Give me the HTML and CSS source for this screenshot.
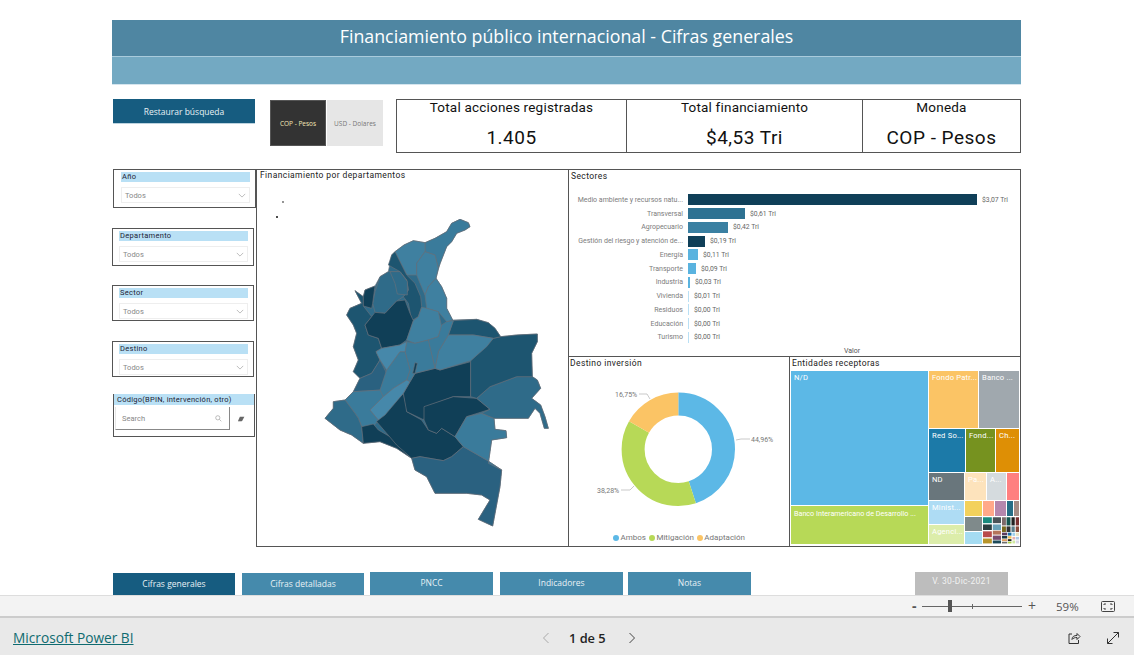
FILE: index.html
```html
<!DOCTYPE html>
<html lang="es">
<head>
<meta charset="utf-8">
<title>Financiamiento público internacional</title>
<link rel="stylesheet" href="styles.css">
</head>
<body>
<main class="report">
  <header class="banner">
    <h1 class="banner-title">Financiamiento público internacional - Cifras generales</h1>
    <div class="banner-sub"></div>
  </header>

  <section class="controls">
    <button class="restore">Restaurar búsqueda</button>
    <div class="toggle">
      <div class="toggle-on">COP - Pesos</div>
      <div class="toggle-off">USD - Dolares</div>
    </div>
    <div class="kpis">
      <div class="kpi kpi-a"><div class="kpi-label">Total acciones registradas</div><div class="kpi-value">1.405</div></div>
      <div class="kpi kpi-b"><div class="kpi-label">Total financiamiento</div><div class="kpi-value">$4,53 Tri</div></div>
      <div class="kpi kpi-c"><div class="kpi-label">Moneda</div><div class="kpi-value">COP - Pesos</div></div>
    </div>
  </section>

  <section class="main">
    <aside class="filters">
      <div class="slicer slicer-year">
        <div class="slicer-head">Año</div>
        <div class="slicer-drop"><span>Todos</span><svg class="chev" viewBox="0 0 10 6"><path d="M1 1l4 4 4-4"/></svg></div>
      </div>
      <div class="slicer slicer-dept">
        <div class="slicer-head">Departamento</div>
        <div class="slicer-drop"><span>Todos</span><svg class="chev" viewBox="0 0 10 6"><path d="M1 1l4 4 4-4"/></svg></div>
      </div>
      <div class="slicer slicer-sector">
        <div class="slicer-head">Sector</div>
        <div class="slicer-drop"><span>Todos</span><svg class="chev" viewBox="0 0 10 6"><path d="M1 1l4 4 4-4"/></svg></div>
      </div>
      <div class="slicer slicer-dest">
        <div class="slicer-head">Destino</div>
        <div class="slicer-drop"><span>Todos</span><svg class="chev" viewBox="0 0 10 6"><path d="M1 1l4 4 4-4"/></svg></div>
      </div>
      <div class="slicer-code">
        <div class="code-head">Código(BPIN, intervención, otro)</div>
        <div class="code-row">
          <div class="code-search"><span>Search</span>
            <svg class="search-ico" viewBox="0 0 10 10"><circle cx="4" cy="4" r="3"/><path d="M6.2 6.2L9 9"/></svg>
          </div>
          <svg class="eraser" viewBox="0 0 10 8"><path d="M3.5 1H9.500L6.500 6.500H1z"/><path class="eraser-l" d="M1 7.500h5"/></svg>
        </div>
      </div>
    </aside>

    <article class="map-panel">
      <h2 class="vis-title">Financiamiento por departamentos</h2>
      <svg class="map" viewBox="-90 -60 870 1080">
        <g class="dep">
          <path class="c2" d="M480 58L505 68 510 80 495 90 470 100 455 125 440 140 420 190 408 235 425 260 440 295 440 325 458 360 530 358 565 368 585 385 602 410 650 405 712 402 712 425 695 460 697 530 712 540 722 565 695 595 722 615 735 650 745 685 733 685 720 640 705 625 685 655 582 655 585 688 618 692 620 713 575 720 570 755 565 790 605 810 600 860 578 978 535 958 570 900 545 885 500 880 405 880 380 830 345 810 335 775 290 745 240 725 190 730 155 705 120 690 75 655 100 625 100 605 135 600 160 575 180 535 160 515 175 480 160 440 170 400 160 375 140 345 150 325 185 310 165 272 190 290 195 270 225 258 240 230 265 215 275 165 285 155 312 135 340 122 375 128 405 115 440 95 455 70z"/>
          <path class="c3" d="M480 58L505 68 510 80 495 90 470 100 455 125 440 140 415 205 405 165 375 155 375 128 405 115 440 95 455 70z"/>
          <path class="c4" d="M285 155L312 135 340 122 375 128 375 155 350 190 350 225 320 225 305 195z"/>
          <path class="c4" d="M375 155L405 165 415 205 408 235 385 260 375 285 360 250 350 225 350 190z"/>
          <path class="c1" d="M275 165L285 155 305 195 320 225 345 250 362 290 365 320 355 350 335 362 325 310 310 290 325 270 320 240 300 215 265 195z"/>
          <path class="c2" d="M240 230L265 215 300 215 320 240 325 270 310 290 290 303 255 340 225 337 218 310 225 275z"/>
          <path class="c2" d="M270 215L300 215 322 245 322 285 292 282 285 250z"/>
          <path class="c1" d="M165 272L190 290 190 318 215 350 195 375 205 405 235 415 245 445 228 455 240 480 215 520 180 535 160 515 175 480 160 440 170 400 160 375 140 345 150 325 185 310z"/>
          <path class="c0" d="M195 375L215 350 225 337 255 340 290 303 315 300 330 340 340 362 320 420 300 435 245 445 235 415 205 405z"/>
          <path class="c0" d="M190 290L195 270 225 258 218 310 215 325 190 318z"/>
          <path class="c25" d="M180 535L215 520 240 480 260 520 245 570 160 575z"/>
          <path class="c3" d="M135 600L160 575 245 570 250 590 210 630 235 660 220 680 185 680 175 655 165 640z"/>
          <path class="c2" d="M75 655L100 625 100 605 135 600 165 640 175 655 185 680 190 730 155 705 120 690z"/>
          <path class="c0" d="M185 680L220 672 235 690 270 710 335 775 290 745 240 725 190 730z"/>
          <path class="c0" d="M230 665L310 580 320 620 320 635 365 660 385 690 410 700 425 685 465 710 490 740 455 770 430 782 360 770 335 775 290 735z"/>
          <path class="c0" d="M310 580L345 520 405 505 420 510 512 485 512 590 460 590 380 620 372 660 320 635z"/>
          <path class="c0" d="M372 620L460 590 530 595 570 628 500 650 465 710 425 685 410 700 385 690 372 660z"/>
          <path class="c25" d="M335 775L360 770 430 782 455 770 490 740 560 780 605 810 600 860 578 978 535 958 570 900 545 885 500 880 405 880 380 830 345 810z"/>
          <path class="c3" d="M465 710L500 650 545 640 582 655 585 688 618 692 620 713 575 720 570 755 565 790 605 810 560 780 490 740z"/>
          <path class="c2" d="M530 595L570 560 650 530 697 530 712 540 722 565 695 595 722 615 735 650 745 685 733 685 720 640 705 625 685 655 582 655 545 640 570 628z"/>
          <path class="c1" d="M512 482L580 415 602 410 650 405 712 402 712 425 695 460 697 530 650 530 570 560 530 595 512 590z"/>
          <path class="c1" d="M445 405L460 362 530 358 565 368 585 385 602 410 580 415 520 405z"/>
          <path class="c4" d="M405 505L415 455 445 405 520 405 580 415 560 440 512 482 420 510z"/>
          <path class="c4" d="M385 260L408 235 425 260 440 295 440 325 458 360 440 365 415 335 380 325 375 285z"/>
          <path class="c4" d="M365 322L380 325 415 335 425 380 415 410 385 420 345 430 320 420 340 362 355 350z"/>
          <path class="c3" d="M415 410L425 375 440 365 460 362 445 405 415 455 405 505 385 425 385 420z"/>
          <path class="c3" d="M315 455L320 425 345 430 385 420 405 505 345 520 330 545 320 540 330 510z"/>
          <path class="c3" d="M240 570L260 510 300 455 315 455 330 510 320 540 280 565 250 590z"/>
          <path class="c5" d="M210 630L250 590 280 565 320 540 330 545 310 580 255 645 235 660z"/>
          <path class="c5" d="M228 455L245 445 300 435 320 425 315 455 300 455 260 510 240 480z"/>
          <path class="c0" d="M345 488L352 490 345 520 338 520z"/>
        </g>
        <circle class="isle" cx="-51" cy="6" r="2.500"/>
        <circle class="isle" cx="-69" cy="51" r="3"/>
      </svg>
    </article>

    <div class="right">
      <article class="sectors">
        <h2 class="vis-title sectors-title">Sectores</h2>
        <ul class="bars">
          <li class="bar-row"><span class="bar-name">Medio ambiente y recursos natu...</span><span class="bar b-dark" style="width:289px"></span><span class="bar-val">$3,07 Tri</span></li>
          <li class="bar-row"><span class="bar-name">Transversal</span><span class="bar b-mid" style="width:57px"></span><span class="bar-val">$0,61 Tri</span></li>
          <li class="bar-row"><span class="bar-name">Agropecuario</span><span class="bar b-mid2" style="width:40px"></span><span class="bar-val">$0,42 Tri</span></li>
          <li class="bar-row"><span class="bar-name">Gestión del riesgo y atención de...</span><span class="bar b-dark" style="width:17px"></span><span class="bar-val">$0,19 Tri</span></li>
          <li class="bar-row"><span class="bar-name">Energía</span><span class="bar b-light" style="width:10px"></span><span class="bar-val">$0,11 Tri</span></li>
          <li class="bar-row"><span class="bar-name">Transporte</span><span class="bar b-light" style="width:8px"></span><span class="bar-val">$0,09 Tri</span></li>
          <li class="bar-row"><span class="bar-name">Industria</span><span class="bar b-light" style="width:2px"></span><span class="bar-val">$0,03 Tri</span></li>
          <li class="bar-row"><span class="bar-name">Vivienda</span><span class="bar b-pale" style="width:1px"></span><span class="bar-val">$0,01 Tri</span></li>
          <li class="bar-row"><span class="bar-name">Residuos</span><span class="bar b-pale" style="width:1px"></span><span class="bar-val">$0,00 Tri</span></li>
          <li class="bar-row"><span class="bar-name">Educación</span><span class="bar b-pale" style="width:1px"></span><span class="bar-val">$0,00 Tri</span></li>
          <li class="bar-row"><span class="bar-name">Turismo</span><span class="bar b-pale" style="width:1px"></span><span class="bar-val">$0,00 Tri</span></li>
        </ul>
        <div class="axis-name">Valor</div>
      </article>

      <div class="lower">
        <article class="donut-panel">
          <h2 class="vis-title">Destino inversión</h2>
          <svg class="donut" viewBox="569 369 220 161">
            <g class="ring">
              <circle class="seg-a" cx="678.300" cy="449.300" r="45.200" pathLength="100"/>
              <circle class="seg-b" cx="678.300" cy="449.300" r="45.200" pathLength="100"/>
              <circle class="seg-c" cx="678.300" cy="449.300" r="45.200" pathLength="100"/>
            </g>
            <path class="leader" d="M736 440L741 439H750M621 490H630L634 486M639 394H647L650 399"/>
            <text class="pct" x="751" y="442">44,96%</text>
            <text class="pct" x="597" y="493">38,28%</text>
            <text class="pct" x="615" y="397">16,75%</text>
          </svg>
          <div class="legend">
            <span class="leg"><i class="dot dot-a"></i>Ambos</span>
            <span class="leg"><i class="dot dot-b"></i>Mitigación</span>
            <span class="leg"><i class="dot dot-c"></i>Adaptación</span>
          </div>
        </article>

        <article class="tree-panel">
          <h2 class="vis-title">Entidades receptoras</h2>
          <div class="tree">
            <div class="tree-left">
              <div class="tile t-nd">N/D</div>
              <div class="tile t-bid">Banco Interamericano de Desarrollo ...</div>
            </div>
            <div class="tree-right">
              <div class="tree-row r1">
                <div class="tile t-fondo">Fondo Patr...</div>
                <div class="tile t-banco">Banco ...</div>
              </div>
              <div class="tree-row r2">
                <div class="tile t-red">Red So...</div>
                <div class="tile t-fond">Fond...</div>
                <div class="tile t-ch">Ch...</div>
              </div>
              <div class="tree-row r3">
                <div class="tile t-nd2">ND</div>
                <div class="tile t-pa">Pa...</div>
                <div class="tile t-a">A...</div>
                <div class="tile t-rose"></div>
              </div>
              <div class="tree-row r4">
                <div class="tree-col c-min">
                  <div class="tile t-min">Minist...</div>
                  <div class="tile t-age">Agenci...</div>
                </div>
                <div class="tree-col c-small">
                  <div class="tree-row r5">
                    <div class="tile t-y"></div>
                    <div class="tile t-s"></div>
                    <div class="tile t-p"></div>
                    <div class="tile t-t"></div>
                    <div class="tile t-b"></div>
                  </div>
                  <div class="tree-row r6">
                    <div class="tree-col c-g">
                      <div class="tile t-g"></div>
                      <div class="tile t-l"></div>
                    </div>
                    <svg class="tiny" viewBox="590 487 110 80">
                      <rect x="590" y="487" width="27" height="18" fill="#1a8a7d"/>
                      <rect x="590" y="509" width="27" height="17" fill="#2c3e3f"/>
                      <rect x="590" y="530" width="27" height="18" fill="#b84a4a"/>
                      <rect x="590" y="552" width="27" height="15" fill="#b8952b"/>
                      <rect x="620" y="487" width="25" height="18" fill="#4a5356"/>
                      <rect x="620" y="509" width="25" height="17" fill="#6aa3b8"/>
                      <rect x="620" y="528" width="25" height="12" fill="#b5735a"/>
                      <rect x="620" y="543" width="25" height="13" fill="#784b6e"/>
                      <rect x="620" y="558" width="25" height="9" fill="#1d4a5a"/>
                      <rect x="648" y="487" width="12" height="25" fill="#7d6a6a"/>
                      <rect x="662" y="487" width="12" height="25" fill="#14554f"/>
                      <rect x="677" y="487" width="10" height="25" fill="#222222"/>
                      <rect x="690" y="487" width="10" height="25" fill="#7a2f2f"/>
                      <rect x="648" y="515" width="12" height="17" fill="#7a6a1f"/>
                      <rect x="662" y="515" width="12" height="17" fill="#333333"/>
                      <rect x="677" y="515" width="10" height="17" fill="#5a7d8a"/>
                      <rect x="690" y="515" width="10" height="17" fill="#8a4a3a"/>
                      <rect x="648" y="534" width="16" height="8" fill="#5a3a5e"/>
                      <rect x="648" y="544" width="16" height="8" fill="#1e3a44"/>
                      <rect x="648" y="554" width="16" height="6" fill="#e0a060"/>
                      <rect x="648" y="562" width="16" height="5" fill="#6d6d6d"/>
                      <rect x="666" y="534" width="11" height="9" fill="#1a6fa8"/>
                      <rect x="666" y="545" width="11" height="7" fill="#f0c050"/>
                      <rect x="666" y="554" width="11" height="6" fill="#222222"/>
                      <rect x="666" y="562" width="11" height="5" fill="#a8d040"/>
                      <rect x="680" y="534" width="8" height="10" fill="#9fd0ee"/>
                      <rect x="690" y="534" width="10" height="10" fill="#e8e0c0"/>
                      <rect x="680" y="547" width="8" height="8" fill="#e8b0b0"/>
                      <rect x="690" y="547" width="10" height="8" fill="#b0c8e8"/>
                      <rect x="680" y="558" width="8" height="9" fill="#d0e8a0"/>
                      <rect x="690" y="558" width="10" height="9" fill="#d8d8e8"/>
                    </svg>
                  </div>
                </div>
              </div>
            </div>
          </div>
        </article>
      </div>
    </div>
  </section>

  <nav class="tabs">
    <div class="tab tab-active">Cifras generales</div>
    <div class="tab tab-2">Cifras detalladas</div>
    <div class="tab tab-3">PNCC</div>
    <div class="tab tab-4">Indicadores</div>
    <div class="tab tab-5">Notas</div>
    <div class="version">V. 30-Dic-2021</div>
  </nav>
</main>

<div class="zoombar">
  <span class="zoom-minus">-</span>
  <div class="slider"><span class="slider-tick"></span><span class="slider-thumb"></span></div>
  <span class="zoom-plus">+</span>
  <span class="zoom-pct">59%</span>
  <svg class="fit" viewBox="0 0 14 11"><rect x="0.500" y="0.500" width="13" height="10" rx="1"/><path d="M3 4V3h2M11 4V3H9M3 7v1h2M11 7v1H9"/></svg>
</div>

<footer class="footer">
  <a class="brand" href="#">Microsoft Power BI</a>
  <div class="pager">
    <svg class="pg pg-off" viewBox="0 0 8 12"><path d="M6.500 1L1.500 6l5 5"/></svg>
    <span class="pg-text">1 de 5</span>
    <svg class="pg" viewBox="0 0 8 12"><path d="M1.500 1l5 5-5 5"/></svg>
  </div>
  <div class="foot-icons">
    <svg class="share" viewBox="0 0 14 14"><path d="M5 3H2v9.500h9.500V9"/><path d="M5 8.500C5 5.500 7 4.500 10 4.500V2.500L13 5.500 10 8.500V6.500C8 6.500 6 7 5 8.500z"/></svg>
    <svg class="expand" viewBox="0 0 14 14"><path d="M1.500 12.500L12.500 1.500M7.500 1.500h5v5M1.500 7.500v5h5"/></svg>
  </div>
</footer>
</body>
</html>
```
FILE: styles.css
```css
* { box-sizing: border-box; }
html, body { margin: 0; padding: 0; height: 655px; overflow: hidden; background: #fff; }
body { font-family: "Roboto", "Liberation Sans", sans-serif; color: #222; }

.report { height: 595px; padding: 20px 113px 0 112px; overflow: hidden; }

/* banner */
.banner { height: 65px; border-bottom: 1px solid #d5e5ee; }
.banner-title {
  margin: 0; height: 37px; background: #4f86a2; color: #fff; text-align: center;
  font: 400 17.800px/32px "Open Sans", sans-serif; border-bottom: 1px solid #a9cbdc;
}
.banner-sub { height: 27px; background: #73a9c2; }

/* controls */
.controls { display: flex; margin-top: 14px; height: 54px; }
.restore {
  width: 142px; height: 25px; margin-left: 1px; border: 0; border-bottom: 1px solid #bcd3df; background: #165c80; color: #e8f1f5;
  font: 400 8.500px "Open Sans", sans-serif; padding: 0;
}
.toggle { display: flex; gap: 1px; margin: 1px 0 0 15px; height: 46px; }
.toggle-on, .toggle-off { width: 56px; display: flex; align-items: center; justify-content: center; font: 400 6.500px "Open Sans", sans-serif; }
.toggle-on { background: #333; color: #f3e7b5; border: 1px solid #555; }
.toggle-off { background: #e6e6e6; color: #777; }
.kpis { display: flex; margin-left: 13px; width: 625px; border: 1px solid #555; }
.kpi { text-align: center; }
.kpi + .kpi { border-left: 1px solid #555; }
.kpi-a { width: 229px; }
.kpi-b { width: 236px; }
.kpi-c { flex: 1; }
.kpi-label { font-size: 13.500px; line-height: 15px; letter-spacing: 0.2px; color: #111; }
.kpi-value { font-size: 19px; line-height: 24px; margin-top: 11px; letter-spacing: 0.5px; color: #111; }

/* main */
.main { display: flex; margin-top: 16px; height: 378px; }
.filters { width: 144px; flex: none; display: flex; flex-direction: column; }
.slicer { border: 1px solid #555; width: 142px; padding: 2px 5px 0 6px; }
.slicer-head { height: 10px; background: #b9e0f5; font-size: 7.500px; line-height: 10px; letter-spacing: 0.3px; padding-left: 1px; color: #223; }
.slicer-drop {
  display: flex; justify-content: space-between; align-items: center; height: 16px; margin-top: 5px;
  border: 1px solid #eee; padding: 0 3px; font-size: 7.500px; color: #888;
}
.slicer-year { width: 143px; margin-left: 1px; height: 39px; padding-left: 7px; padding-top: 2px; }
.slicer-dept { margin-top: 20px; height: 38px; }
.slicer-sector { margin-top: 19px; height: 36px; }
.slicer-dest { margin-top: 20px; height: 36px; }
.chev { width: 8px; height: 5px; fill: none; stroke: #999; stroke-width: 0.800; }
.slicer-code { margin: 17px 0 0 1px; height: 43px; width: 142px; border: 1px solid #555; border-top: 0; }
.code-head { height: 11px; background: #b9e0f5; font-size: 7.500px; line-height: 11px; letter-spacing: 0.25px; color: #223; padding-left: 3px; white-space: nowrap; }
.code-row { display: flex; align-items: center; margin-top: 2px; padding-left: 1px; }
.code-search {
  width: 115px; height: 23px; border-right: 1px solid #888; border-bottom: 1px solid #888; border-left: 1px solid #e6e6e6;
  display: flex; align-items: center; justify-content: space-between; padding: 0 7px 0 6px; font-size: 7.500px; color: #888;
}
.search-ico { width: 7px; height: 7px; fill: none; stroke: #999; stroke-width: 0.900; }
.eraser { width: 8px; height: 6px; margin-left: 7px; fill: #666; }
.eraser-l { stroke: #aaa; stroke-width: 0.800; fill: none; }

/* panels */
.vis-title { margin: 0; font-size: 8.500px; line-height: 11px; font-weight: 400; letter-spacing: 0.4px; color: #222; padding-left: 2px; }
.map-panel { width: 313px; flex: none; border: 1px solid #555; }
.map-panel .vis-title { padding-left: 3px; height: 10px; }
.map { display: block; width: 290px; height: 360px; margin-left: 13px; }
.dep path { stroke: #66707a; stroke-width: 2; stroke-linejoin: round; }
.c0 { fill: #103f57; }
.c1 { fill: #1d5570; }
.c2 { fill: #2f6b89; }
.c25 { fill: #2a6180; }
.c3 { fill: #3a7b9b; }
.c4 { fill: #3f80a0; }
.c5 { fill: #4688aa; }
.isle { fill: #111; }

.right { flex: 1; display: flex; flex-direction: column; margin-left: -1px; }
.sectors { height: 188px; border: 1px solid #555; }
.sectors-title { padding: 1px 0 0 2px; height: 19px; }
.bars { list-style: none; margin: 4px 0 0; padding: 0; }
.bar-row { display: flex; align-items: center; height: 13.750px; }
.bar-name { width: 114px; margin-right: 5px; flex: none; text-align: right; font-size: 7px; color: #7c7c7c; white-space: nowrap; }
.bar { height: 11px; flex: none; }
.b-dark { background: #0f3f58; }
.b-mid { background: #2e7292; }
.b-mid2 { background: #3a80a2; }
.b-light { background: #5ab3df; }
.b-pale { background: #b9e0f5; }
.bar-val { margin-left: 5px; font-size: 6.800px; color: #666; white-space: nowrap; }
.axis-name { text-align: center; font-size: 7px; color: #555; margin-top: 3px; padding-left: 115px; line-height: 9px; }

.lower { display: flex; flex: 1; margin-top: -1px; }
.donut-panel { width: 222px; border: 1px solid #555; }
.donut-panel .vis-title { height: 12px; line-height: 12px; padding-left: 1px; }
.donut { display: block; width: 220px; height: 161px; }
.ring circle { fill: none; stroke-width: 23; }
.ring { transform: rotate(-90deg); transform-origin: 678.300px 449.300px; }
.seg-a { stroke: #5cb8e6; stroke-dasharray: 44.960 100; }
.seg-b { stroke: #b7d957; stroke-dasharray: 38.280 100; stroke-dashoffset: -44.960; }
.seg-c { stroke: #fbc465; stroke-dasharray: 16.760 100; stroke-dashoffset: -83.240; }
.leader { fill: none; stroke: #bbb; stroke-width: 0.800; }
.pct { font-size: 7px; fill: #777; }
.legend { display: flex; justify-content: center; gap: 3px; font-size: 8px; color: #777; margin-top: 2px; line-height: 11px; }
.leg { display: flex; align-items: center; gap: 1.500px; }
.dot { width: 6px; height: 6px; border-radius: 50%; }
.dot-a { background: #5cb8e6; }
.dot-b { background: #b7d957; }
.dot-c { background: #fbc465; }

.tree-panel { flex: 1; margin-left: -1px; border: 1px solid #555; padding-left: 1px; }
.tree-panel .vis-title { height: 14px; line-height: 12px; padding-left: 1px; }
.tree { display: flex; gap: 1px; height: 173px; }
.tree-left { width: 137px; display: flex; flex-direction: column; gap: 1px; }
.tree-right { width: 90px; display: flex; flex-direction: column; gap: 1px; }
.tree-row { display: flex; gap: 1px; }
.tree-col { display: flex; flex-direction: column; gap: 1px; }
.tile { color: #fff; font-size: 7.600px; letter-spacing: 0.2px; line-height: 10px; padding: 2px 0 0 3px; overflow: hidden; white-space: nowrap; }
.t-nd { height: 134px; background: #5cb8e6; }
.t-bid { flex: 1; background: #b7d957; padding-top: 3px; font-size: 7.200px; letter-spacing: 0; }
.r1 { height: 57px; }
.r2 { height: 43px; }
.r3 { height: 27px; }
.r4 { flex: 1; }
.t-fondo { width: 49px; background: #fbc465; }
.t-banco { flex: 1; background: #a0a8ae; }
.t-red { width: 36px; background: #1c7aa8; }
.t-fond { width: 29px; background: #76921f; }
.t-ch { flex: 1; background: #de8f05; }
.t-nd2 { width: 35px; background: #69767c; }
.t-pa { width: 21px; background: #fde3bc; }
.t-a { width: 19px; background: #d5dbde; }
.t-rose { flex: 1; background: #ff8080; }
.c-min { width: 35px; }
.t-min { height: 23px; background: #aedcf4; }
.t-age { flex: 1; background: #dcedaa; }
.c-small { flex: 1; }
.r5 { height: 15px; }
.r6 { flex: 1; }
.t-y { width: 17px; background: #f3d15c; }
.t-s { width: 11px; background: #ffa98a; }
.t-p { width: 11px; background: #b587ad; }
.t-t { width: 6px; background: #266d85; }
.t-b { flex: 1; background: #a48b84; }
.c-g { width: 17px; }
.t-g { height: 14px; background: #7f8a8b; }
.t-l { flex: 1; background: #a5dcf2; }
.tiny { display: block; width: 36px; height: 26.700px; }

/* tabs */
.tabs { display: flex; align-items: flex-end; margin-top: 25px; height: 23px; padding-left: 1px; }
.tab { width: 123px; height: 23px; display: flex; align-items: center; justify-content: center; background: #458aac; color: #e8f1f5; font: 400 8.500px "Open Sans", sans-serif; }
.tab-active { width: 122px; height: 22px; background: #165c80; padding-bottom: 1px; }
.tab-2 { width: 122px; height: 22px; margin-left: 7px; padding-bottom: 1px; }
.tab-3 { margin-left: 6px; padding-bottom: 3px; }
.tab-4 { margin-left: 7px; padding-bottom: 3px; }
.tab-5 { margin-left: 5px; padding-bottom: 3px; }
.version { width: 93px; height: 23px; margin-left: 164px; background: #bdbdbd; color: #f2f2f2; font-size: 8.500px; letter-spacing: 0.3px; text-align: center; line-height: 18px; }

/* zoom bar */
.zoombar { height: 23px; background: #f3f3f3; border-top: 1px solid #ddd; border-bottom: 2px solid #ccc; display: flex; align-items: center; padding-left: 912px; color: #555; font-family: "Open Sans", sans-serif; }
.zoom-minus { width: 10px; font-size: 14px; font-weight: 700; line-height: 18px; }
.slider { position: relative; width: 100px; height: 1px; background: #666; }
.slider-thumb { position: absolute; left: 26px; top: -6px; width: 4px; height: 12px; background: #555; }
.slider-tick { position: absolute; left: 50px; top: -2px; width: 1px; height: 5px; background: #666; }
.zoom-plus { margin-left: 6px; font-size: 14px; width: 28px; line-height: 18px; }
.zoom-pct { font-size: 11.500px; width: 45px; }
.fit { width: 14px; height: 11px; fill: none; stroke: #444; stroke-width: 1; }

/* footer */
.footer { height: 37px; background: #e9e9e9; display: flex; align-items: center; padding: 2px 13px 0; }
.brand { font: 400 13.700px "Open Sans", sans-serif; color: #0f6b70; text-decoration: underline; width: 528px; }
.pager { display: flex; align-items: center; font: 600 12.800px "Open Sans", sans-serif; color: #222; }
.pg { width: 8px; height: 12px; fill: none; stroke: #444; stroke-width: 1; margin-left: 1px; }
.pg-off { stroke: #aaa; margin-right: 19px; }
.pg-text { margin-right: 21px; }
.foot-icons { margin-left: auto; display: flex; align-items: center; gap: 25px; padding-right: 1px; }
.share, .expand { width: 14px; height: 14px; fill: none; stroke: #333; stroke-width: 1; display: block; }
```
